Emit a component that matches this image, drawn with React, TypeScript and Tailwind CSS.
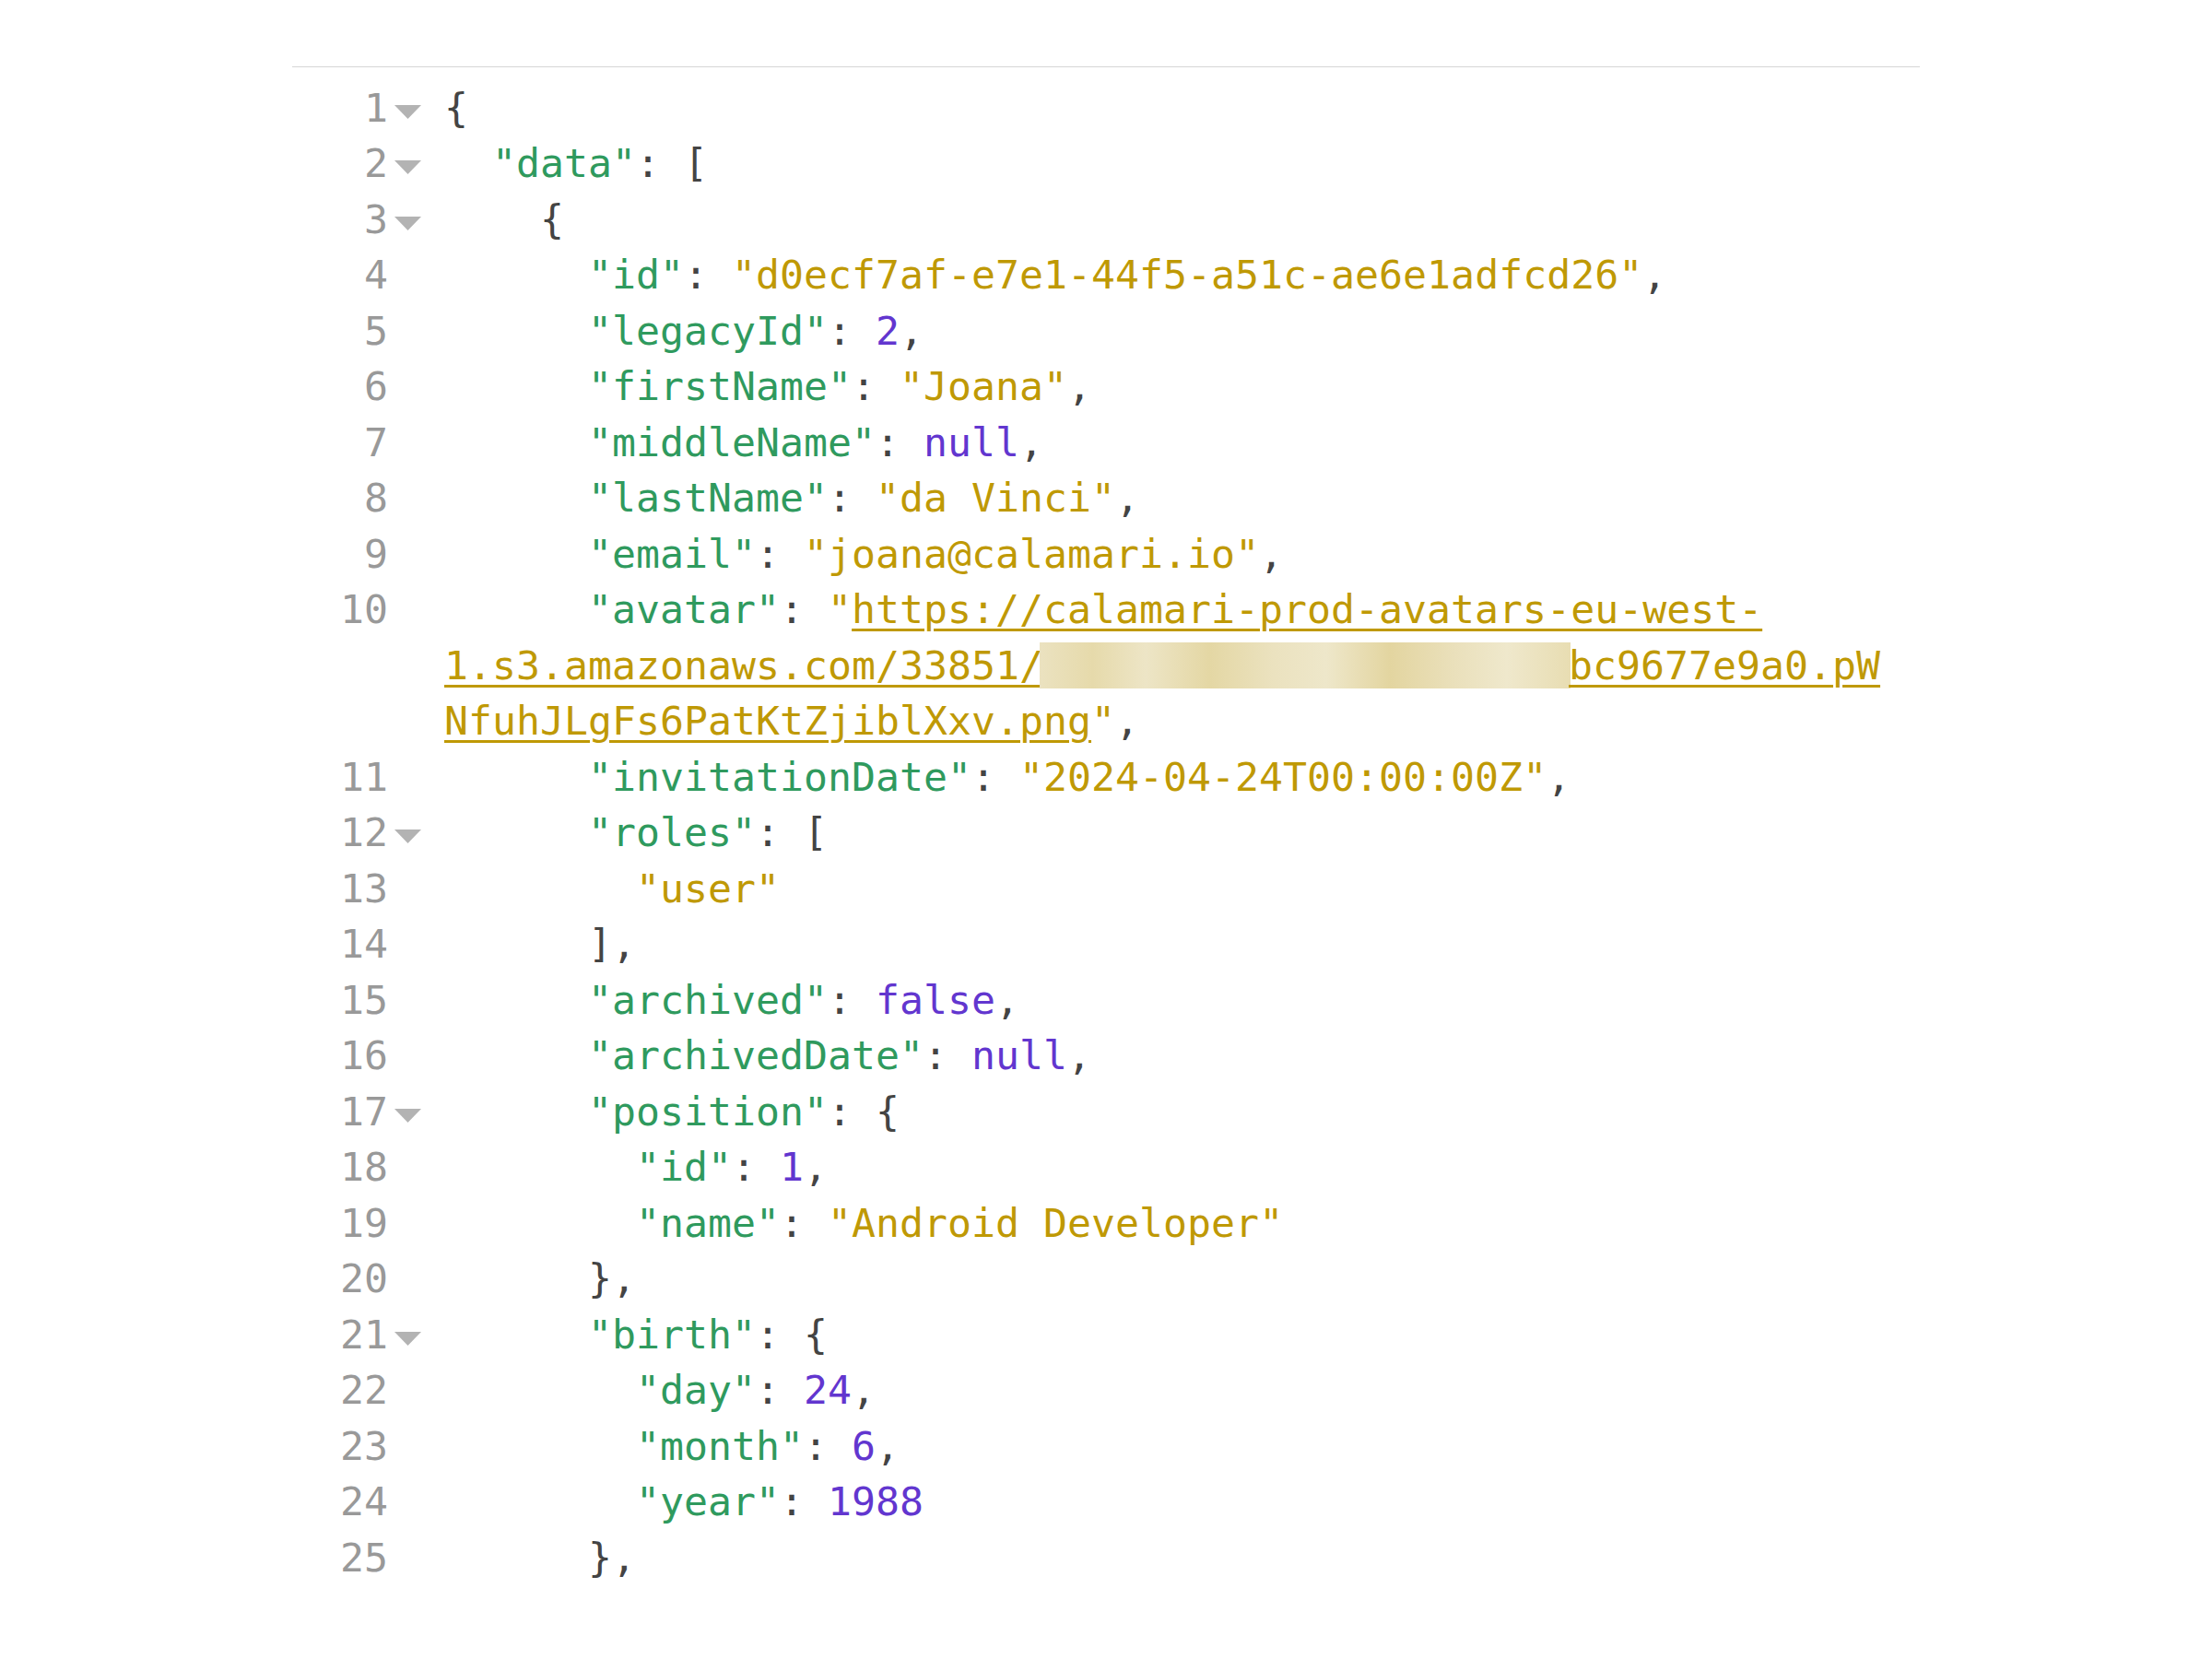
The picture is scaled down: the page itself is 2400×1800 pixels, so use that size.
import React from "react";

const K = ({ s }: { s: string }) => <span className="text-[#2f9a5e]">"{s}"</span>;
const S = ({ s }: { s: string }) => <span className="text-[#bf9905]">"{s}"</span>;
const N = ({ s }: { s: string }) => <span className="text-[#6236cf]">{s}</span>;
const P = ({ s }: { s: string }) => <span className="text-[#444444]">{s}</span>;

type Row = { n?: number; fold?: boolean; c: React.ReactNode };

const ind = (k: number) => " ".repeat(k);

const rows: Row[] = [
  { n: 1, fold: true, c: <P s="{" /> },
  { n: 2, fold: true, c: <>{ind(2)}<K s="data" /><P s=": [" /></> },
  { n: 3, fold: true, c: <>{ind(4)}<P s="{" /></> },
  { n: 4, c: <>{ind(6)}<K s="id" /><P s=": " /><S s="d0ecf7af-e7e1-44f5-a51c-ae6e1adfcd26" /><P s="," /></> },
  { n: 5, c: <>{ind(6)}<K s="legacyId" /><P s=": " /><N s="2" /><P s="," /></> },
  { n: 6, c: <>{ind(6)}<K s="firstName" /><P s=": " /><S s="Joana" /><P s="," /></> },
  { n: 7, c: <>{ind(6)}<K s="middleName" /><P s=": " /><N s="null" /><P s="," /></> },
  { n: 8, c: <>{ind(6)}<K s="lastName" /><P s=": " /><S s="da Vinci" /><P s="," /></> },
  { n: 9, c: <>{ind(6)}<K s="email" /><P s=": " /><S s="joana@calamari.io" /><P s="," /></> },
  {
    n: 10,
    c: (
      <>
        {ind(6)}<K s="avatar" /><P s=": " />
        <span className="text-[#bf9905]">"<span className="underline decoration-[3px] underline-offset-[6px]">https://calamari-prod-avatars-eu-west-</span></span>
      </>
    ),
  },
  {
    c: (
      <span className="text-[#bf9905]">
        <span className="underline decoration-[3px] underline-offset-[6px]">1.s3.amazonaws.com/33851/</span>
        <span className="inline-block align-top mt-[5px] h-[50px] w-[576px] -ml-[4px] mr-[-2px] bg-[linear-gradient(90deg,#ebe2c0_0%,#e6daab_10%,#ede5c6_20%,#e4d7a4_32%,#ebe2bf_44%,#eee7ca_54%,#e3d5a0_66%,#eae0bb_78%,#efe8cc_88%,#e8ddb2_100%)]"></span>
        <span className="underline decoration-[3px] underline-offset-[6px]">bc9677e9a0.pW</span>
      </span>
    ),
  },
  {
    c: (
      <span className="text-[#bf9905]">
        <span className="underline decoration-[3px] underline-offset-[6px]">NfuhJLgFs6PatKtZjiblXxv.png</span>"<P s="," />
      </span>
    ),
  },
  { n: 11, c: <>{ind(6)}<K s="invitationDate" /><P s=": " /><S s="2024-04-24T00:00:00Z" /><P s="," /></> },
  { n: 12, fold: true, c: <>{ind(6)}<K s="roles" /><P s=": [" /></> },
  { n: 13, c: <>{ind(8)}<S s="user" /></> },
  { n: 14, c: <>{ind(6)}<P s="]," /></> },
  { n: 15, c: <>{ind(6)}<K s="archived" /><P s=": " /><N s="false" /><P s="," /></> },
  { n: 16, c: <>{ind(6)}<K s="archivedDate" /><P s=": " /><N s="null" /><P s="," /></> },
  { n: 17, fold: true, c: <>{ind(6)}<K s="position" /><P s=": {" /></> },
  { n: 18, c: <>{ind(8)}<K s="id" /><P s=": " /><N s="1" /><P s="," /></> },
  { n: 19, c: <>{ind(8)}<K s="name" /><P s=": " /><S s="Android Developer" /></> },
  { n: 20, c: <>{ind(6)}<P s="}," /></> },
  { n: 21, fold: true, c: <>{ind(6)}<K s="birth" /><P s=": {" /></> },
  { n: 22, c: <>{ind(8)}<K s="day" /><P s=": " /><N s="24" /><P s="," /></> },
  { n: 23, c: <>{ind(8)}<K s="month" /><P s=": " /><N s="6" /><P s="," /></> },
  { n: 24, c: <>{ind(8)}<K s="year" /><P s=": " /><N s="1988" /></> },
  { n: 25, c: <>{ind(6)}<P s="}," /></> },
];

function Fold() {
  return (
    <svg width="29" height="15" viewBox="0 0 29 15" className="mt-[27px] ml-[7px]">
      <polygon points="0,0 29,0 14.5,15" fill="#b3b3b3" />
    </svg>
  );
}

export default function App() {
  return (
    <div className="min-h-[1800px] w-full bg-white font-['DejaVu_Sans_Mono','Liberation_Mono',monospace] text-[43.2px] leading-[60.5px]">
      <div className="mx-auto w-[1766px] pt-[72px]">
        <div className="border-t border-[#d6d6d6] pt-[13.5px]">
          {rows.map((r, i) => (
            <div key={i} className="flex h-[60.5px]">
              <div className="w-[104px] shrink-0 text-right text-[#999999]">{r.n ?? ""}</div>
              <div className="w-[61px] shrink-0">{r.fold ? <Fold /> : null}</div>
              <div className="whitespace-pre">{r.c}</div>
            </div>
          ))}
        </div>
      </div>
    </div>
  );
}
